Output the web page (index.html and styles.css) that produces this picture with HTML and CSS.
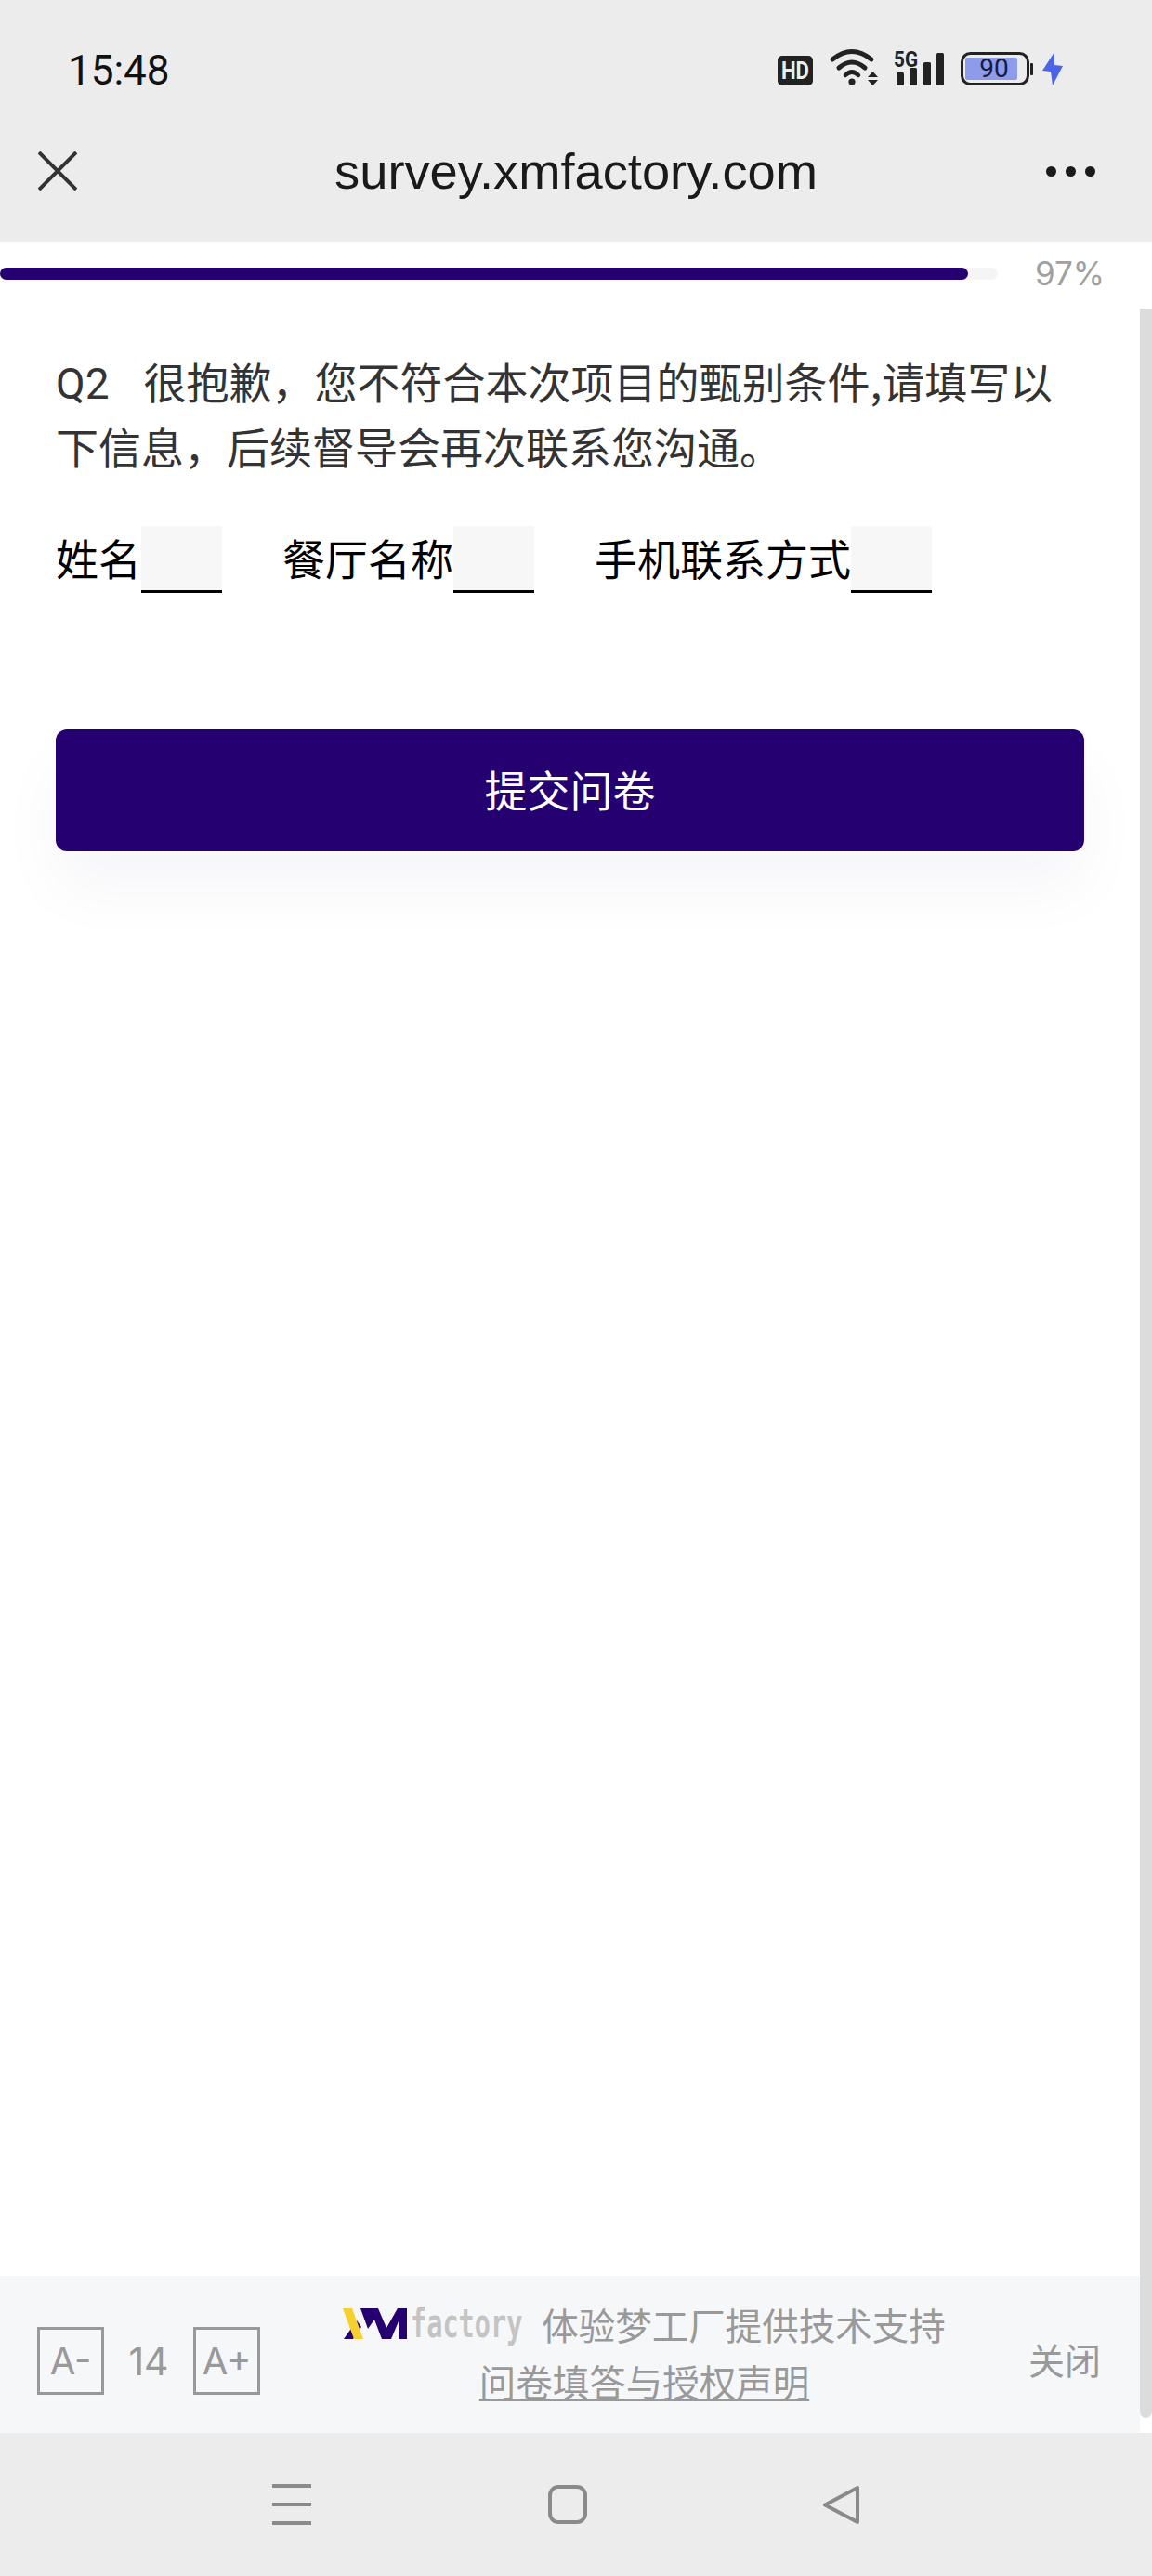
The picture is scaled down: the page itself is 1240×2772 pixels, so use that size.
FILE: index.html
```html
<!DOCTYPE html>
<html lang="zh-CN">
<head>
    <meta charset="UTF-8">
    <meta name="viewport" content="width=device-width, initial-scale=1.0">
    <title>survey.xmfactory.com</title>
    <link rel="stylesheet" href="styles.css">
</head>
<body>
    <div class="phone">
        <!-- 状态栏 + 标题栏 -->
        <header class="top">
            <div class="status">
                <span class="time">15:48</span>
                <div class="status-icons">
                    <svg class="ic-hd" width="38" height="32" viewBox="0 0 38 32">
                        <rect width="38" height="32" rx="5" fill="#222"/>
                        <text x="19" y="25" text-anchor="middle" class="svg-hd" textLength="30" lengthAdjust="spacingAndGlyphs">HD</text>
                    </svg>
                    <svg class="ic-wifi" width="51" height="39" viewBox="0 0 51 39">
                        <path d="M2 11 Q23 -6 44 11" fill="none" stroke="#222" stroke-width="5" stroke-linecap="round"/>
                        <path d="M9 20 Q23 8 37 20" fill="none" stroke="#222" stroke-width="5" stroke-linecap="round"/>
                        <path d="M16 28 Q23 21 30 28" fill="none" stroke="#222" stroke-width="4.5" stroke-linecap="round"/>
                        <circle cx="23" cy="35" r="3.6" fill="#222"/>
                        <path d="M40 30 L45.5 24 L51 30 Z M40 33 L51 33 L45.5 39 Z" fill="#222"/>
                    </svg>
                    <svg class="ic-net" width="54" height="39" viewBox="0 0 54 39">
                        <text x="0" y="19" class="svg-5g" textLength="26" lengthAdjust="spacingAndGlyphs">5G</text>
                        <rect x="3" y="25" width="8" height="14" rx="1.5" fill="#222"/>
                        <rect x="17" y="20" width="8" height="19" rx="1.5" fill="#222"/>
                        <rect x="32" y="14" width="8" height="25" rx="1.5" fill="#222"/>
                        <rect x="46" y="4" width="8" height="35" rx="1.5" fill="#222"/>
                    </svg>
                    <svg class="ic-batt" width="78" height="36" viewBox="0 0 78 36">
                        <rect x="1.5" y="1.5" width="71" height="33" rx="9" fill="none" stroke="#222" stroke-width="3"/>
                        <rect x="5" y="6" width="56" height="24" rx="2" fill="#8e9bea"/>
                        <rect x="75" y="12" width="3" height="13" rx="1" fill="#222"/>
                        <text x="36" y="27" text-anchor="middle" class="svg-batt">90</text>
                    </svg>
                    <svg class="ic-bolt" width="22" height="36" viewBox="0 0 22 36">
                        <path d="M13 0 L0 20 L9 21 L11 36 L22 15 L13 14 Z" fill="#4c63e8"/>
                    </svg>
                </div>
            </div>
            <div class="titlebar">
                <svg class="close" width="42" height="42" viewBox="0 0 42 42">
                    <path d="M1 1 L41 41 M41 1 L1 41" stroke="#333" stroke-width="4" fill="none"/>
                </svg>
                <div class="url">survey.xmfactory.com</div>
                <div class="dots"><i></i><i></i><i></i></div>
            </div>
        </header>

        <!-- 进度 -->
        <div class="progress">
            <div class="track"><div class="fill" style="width: 97%;"></div></div>
            <span class="pct">97%</span>
        </div>

        <!-- 问卷内容 -->
        <main class="survey">
            <p class="question"><span class="qno">Q2</span>很抱歉，您不符合本次项目的甄别条件,请填写以下信息，后续督导会再次联系您沟通。</p>
            <div class="fields">
                <label class="field">姓名<input type="text"></label>
                <label class="field">餐厅名称<input type="text"></label>
                <label class="field">手机联系方式<input type="text"></label>
            </div>
            <button class="submit">提交问卷</button>
        </main>

        <!-- 底部工具条 -->
        <footer class="toolbar">
            <div class="fontsize">
                <span class="fs-btn">A-</span>
                <span class="fs-num">14</span>
                <span class="fs-btn">A+</span>
            </div>
            <div class="support">
                <div class="support-line">
                    <svg class="logo-xm" width="69" height="33" viewBox="0 0 69 33">
                        <path d="M1 33 L11 33 L20 20 L15 13 Z" fill="#240070"/>
                        <path d="M19 0 L38 0 L47 21 L59 0 L69 0 L69 33 L60 33 L60 14 L52 33 L42 33 L34 12 L27 22 Z" fill="#240070"/>
                        <path d="M0 0 L10 0 L22 33 L12 33 Z" fill="#f6d02f"/>
                    </svg>
                    <span class="logo-word">factory</span>
                    <span>体验梦工厂提供技术支持</span>
                </div>
                <a class="statement" href="#">问卷填答与授权声明</a>
            </div>
            <span class="close-link">关闭</span>
        </footer>

        <!-- 系统导航 -->
        <nav class="navbar">
            <div class="nav-menu"><i></i><i></i><i></i></div>
            <div class="nav-home"></div>
            <svg class="nav-back" width="41" height="41" viewBox="0 0 41 41">
                <path d="M3 20.5 L38 2 L38 39 Z" fill="none" stroke="#8a8a8a" stroke-width="4" stroke-linejoin="round"/>
            </svg>
        </nav>

        <div class="scrollbar"></div>
    </div>
</body>
</html>
```

FILE: styles.css
```css
* {
    box-sizing: border-box;
}
body {
    margin: 0;
    font-family: "Noto Sans CJK SC", sans-serif;
    background-color: #fff;
}
.phone {
    position: relative;
    display: flex;
    flex-direction: column;
    width: 1240px;
    height: 2772px;
    overflow: hidden;
}

/* top */
.top {
    height: 260px;
    background-color: #ececec;
}
.status {
    display: flex;
    align-items: center;
    height: 144px;
    padding: 0 96px 0 73px;
}
.time {
    margin-top: 7px;
    font-family: Roboto, sans-serif;
    font-size: 44px;
    color: #111;
}
.status-icons {
    display: flex;
    align-items: flex-end;
    margin-left: auto;
    height: 39px;
}
.status-icons svg {
    overflow: visible;
}
.ic-wifi {
    margin-left: 19px;
}
.ic-net {
    margin-left: 17px;
}
.ic-batt {
    margin-left: 18px;
}
.ic-bolt {
    margin-left: 10px;
}
.svg-hd {
    font: 700 25px Roboto, sans-serif;
    fill: #eee;
}
.svg-5g {
    font: 700 24px Roboto, sans-serif;
    fill: #222;
}
.svg-batt {
    font: 400 28px Roboto, sans-serif;
    fill: #1a1a3a;
}
.titlebar {
    display: grid;
    grid-template-columns: 1fr auto 1fr;
    align-items: center;
    height: 80px;
    padding: 0 41px;
}
.url {
    font-family: "Liberation Sans", sans-serif;
    font-size: 54.3px;
    color: #1a1a1a;
}
.dots {
    display: flex;
    justify-self: end;
    gap: 10px;
    margin-right: 20px;
}
.dots i {
    width: 11px;
    height: 11px;
    border-radius: 50%;
    background-color: #1a1a1a;
}

/* progress */
.progress {
    display: flex;
    align-items: center;
    height: 68px;
}
.track {
    width: 1074px;
    height: 13px;
    border-radius: 7px;
    background-color: #f5f5f5;
}
.fill {
    height: 100%;
    border-radius: 7px;
    background-color: #240070;
}
.pct {
    margin-left: 40px;
    font-family: Inter, sans-serif;
    font-size: 35px;
    color: #a0a0a0;
}

/* survey */
.survey {
    flex: 1;
    width: 1227px;
    padding: 48px 60px 0;
}
.question {
    margin: 0;
    font-size: 46px;
    line-height: 66px;
    color: #333;
}
.qno {
    margin-right: 37px;
    font-family: Roboto, sans-serif;
}
.fields {
    display: flex;
    gap: 65px;
    margin-top: 54px;
}
.field {
    display: flex;
    align-items: flex-start;
    font-size: 46px;
    line-height: 66px;
    color: #000;
}
.field input {
    width: 87px;
    height: 72px;
    padding: 0;
    border: 0;
    border-bottom: 3px solid #000;
    border-radius: 0;
    background-color: #f7f7f7;
}
.submit {
    display: block;
    width: 100%;
    height: 131px;
    margin-top: 147px;
    padding: 0 0 6px;
    border: 0;
    border-radius: 12px;
    background-color: #240070;
    box-shadow: 0 40px 70px rgba(36, 0, 112, 0.04);
    font-family: inherit;
    font-size: 46px;
    color: #fff;
}

/* toolbar */
.toolbar {
    display: flex;
    align-items: center;
    width: 1227px;
    height: 169px;
    padding: 0 42px 0 40px;
    background-color: #f6f7f9;
    color: #999;
}
.fontsize {
    display: flex;
    align-items: center;
    margin-top: 14px;
}
.fs-btn {
    display: flex;
    align-items: center;
    justify-content: center;
    width: 72px;
    height: 73px;
    border: 3px solid #999;
    font-family: Inter, sans-serif;
    font-size: 40px;
}
.fs-num {
    width: 96px;
    text-align: center;
    font-family: Inter, sans-serif;
    font-size: 41px;
}
.support {
    flex: 1;
    padding-bottom: 5px;
    text-align: center;
    font-size: 39.5px;
    line-height: 61px;
}
.support-line {
    display: flex;
    align-items: center;
    justify-content: center;
}
.logo-word {
    display: inline-block;
    width: 118px;
    margin-right: 23px;
    transform: scaleX(0.68);
    transform-origin: left center;
    font-family: "DejaVu Sans Mono", monospace;
    font-weight: 700;
    font-size: 42px;
    color: #c4c4c4;
}
.logo-xm {
    margin-right: 4px;
}
.statement {
    color: #999;
}
.close-link {
    margin-top: 8px;
    font-size: 39px;
}

/* nav */
.navbar {
    position: relative;
    flex: 0 0 154px;
    display: flex;
    align-items: center;
    background-color: #ececec;
    padding: 0 0 0 293px;
}
.nav-menu {
    display: flex;
    flex-direction: column;
    gap: 16px;
    width: 42px;
}
.nav-menu i {
    height: 4px;
    background-color: #8a8a8a;
}
.nav-home {
    width: 42px;
    height: 42px;
    margin-left: 255px;
    border: 4px solid #8a8a8a;
    border-radius: 11px;
}
.nav-back {
    margin-left: 253px;
}

.scrollbar {
    position: absolute;
    top: 332px;
    right: 0;
    width: 13px;
    height: 2270px;
    border-radius: 0 0 7px 7px;
    background-color: #dcdcdc;
}
```
